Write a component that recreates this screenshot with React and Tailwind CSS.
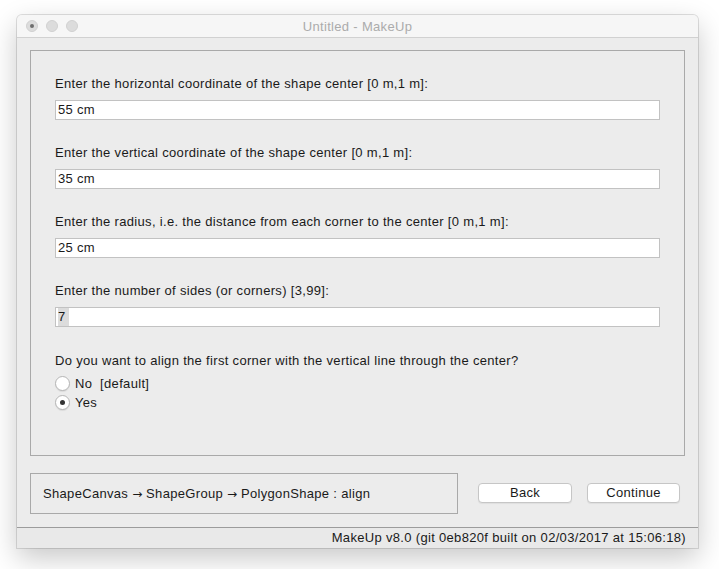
import React from 'react';

const fields = [
  { label: 'Enter the horizontal coordinate of the shape center [0 m,1 m]:', value: '55 cm' },
  { label: 'Enter the vertical coordinate of the shape center [0 m,1 m]:', value: '35 cm' },
  { label: 'Enter the radius, i.e. the distance from each corner to the center [0 m,1 m]:', value: '25 cm' },
];

function Field({ label, children }) {
  return (
    <div className="flex flex-col">
      <div className="h-[16px] leading-[16px]">{label}</div>
      <div className="mt-[8px] h-[20px] border border-[#c2c2c2] bg-white pl-[2px] leading-[18px]">
        {children}
      </div>
    </div>
  );
}

function Radio({ checked, label }) {
  return (
    <div className="flex h-[19px] items-center">
      <span className="flex h-[15px] w-[15px] items-center justify-center rounded-full border border-[#b5b5b5] bg-white shadow-[0_1px_1px_rgba(0,0,0,0.08)]">
        {checked && <span className="h-[5px] w-[5px] rounded-full bg-[#333]" />}
      </span>
      <span className="ml-[5px] whitespace-pre">{label}</span>
    </div>
  );
}

function Arrow() {
  return (
    <span className="text-[12px] tracking-normal" style={{ fontFamily: '"DejaVu Sans", sans-serif' }}>
      →
    </span>
  );
}

export default function App() {
  return (
    <div className="h-[569px] w-[719px] bg-white pl-[17px] pt-[15px] text-[13px] tracking-[0.32px] text-[#1a1a1a]" style={{ fontFamily: '"Liberation Sans", Arial, sans-serif' }}>
      <div className="flex h-[533px] w-[681px] flex-col overflow-hidden rounded-t-[5px] bg-[#ececec] shadow-[0_0_0_1px_rgba(0,0,0,0.12),0_10px_28px_rgba(0,0,0,0.22)]">
        {/* title bar */}
        <div className="relative flex h-[23px] items-center border-b border-[#d1d1d1] bg-[#f6f6f6]">
          <div className="flex items-center gap-[8px] pl-[9px]">
            <span className="flex h-[12px] w-[12px] items-center justify-center rounded-full border border-[#d0d0d0] bg-[#dcdcdc]">
              <span className="h-[4px] w-[4px] rounded-full bg-[#6e6e6e]" />
            </span>
            <span className="h-[12px] w-[12px] rounded-full border border-[#d0d0d0] bg-[#dcdcdc]" />
            <span className="h-[12px] w-[12px] rounded-full border border-[#d0d0d0] bg-[#dcdcdc]" />
          </div>
          <div className="absolute inset-x-0 top-[1px] flex h-[22px] items-center justify-center text-[#ababab]">
            Untitled - MakeUp
          </div>
        </div>

        {/* main panel */}
        <div className="mx-[13px] mt-[12px] h-[406px] border border-[#a9a9a9] px-[24px] pt-[25px]">
          <div className="flex flex-col gap-[25px]">
            {fields.map((f) => (
              <Field key={f.label} label={f.label}>{f.value}</Field>
            ))}
            <Field label="Enter the number of sides (or corners) [3,99]:">
              <span className="inline-block bg-[#dcdcdc] pr-[3px]">7</span>
            </Field>
          </div>
          <div className="mt-[26px] h-[16px] leading-[16px]">
            Do you want to align the first corner with the vertical line through the center?
          </div>
          <div className="mt-[5px] flex flex-col">
            <Radio label="No  [default]" />
            <Radio checked label="Yes" />
          </div>
        </div>

        {/* bottom row */}
        <div className="mx-[13px] mt-[17px] flex h-[41px] items-start">
          <div className="flex h-[41px] w-[428px] items-center border border-[#a9a9a9] pl-[12px] whitespace-pre">
            ShapeCanvas <Arrow /> ShapeGroup <Arrow /> PolygonShape : align
          </div>
          <div className="ml-[20px] mt-[10px] flex gap-[15px]">
            <button className="h-[20px] w-[94px] rounded-[4px] border border-[#c6c6c6] bg-white leading-[18px] shadow-[0_1px_1px_rgba(0,0,0,0.06)]">
              Back
            </button>
            <button className="h-[20px] w-[93px] rounded-[4px] border border-[#c6c6c6] bg-white leading-[18px] shadow-[0_1px_1px_rgba(0,0,0,0.06)]">
              Continue
            </button>
          </div>
        </div>

        {/* status bar */}
        <div className="mt-auto flex h-[21px] items-center justify-end border-t border-[#9c9c9c] bg-[#e9e9e9] pr-[12px]">
          MakeUp v8.0 (git 0eb820f built on 02/03/2017 at 15:06:18)
        </div>
      </div>
    </div>
  );
}
